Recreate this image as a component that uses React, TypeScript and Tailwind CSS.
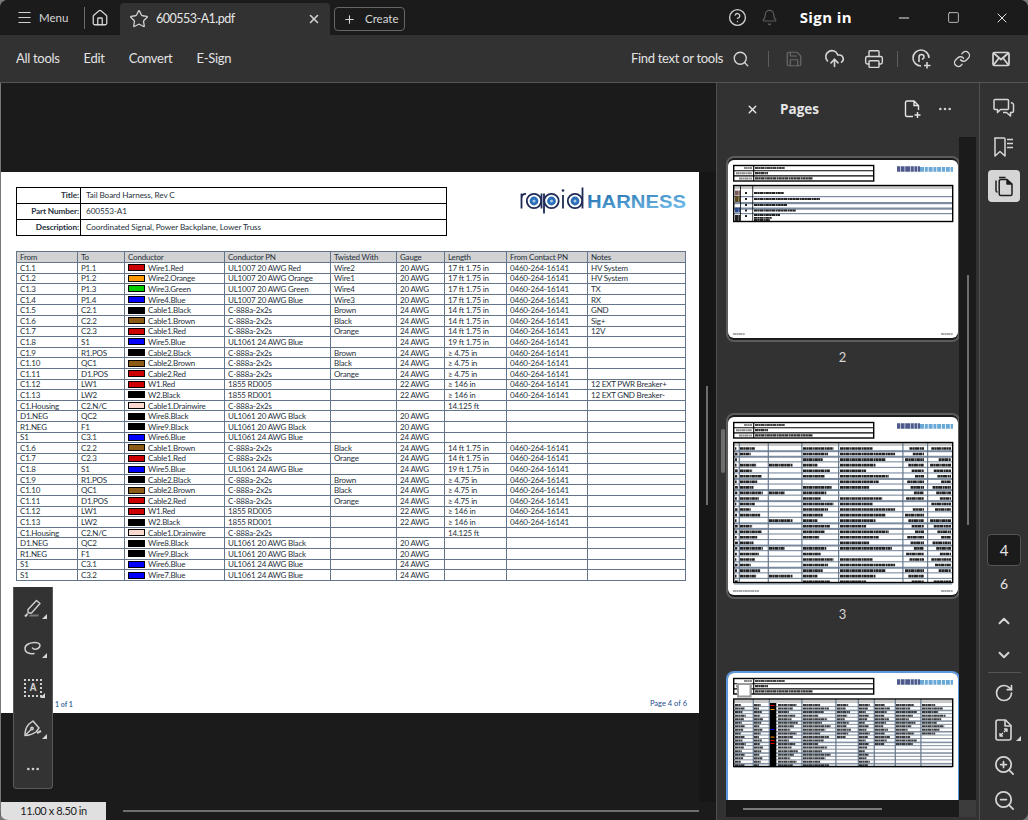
import {
  Bell,
  ChevronDown,
  ChevronUp,
  CircleHelp,
  CloudUpload,
  Ellipsis,
  Home,
  Link,
  Menu,
  Minus,
  Plus,
  Printer,
  RotateCw,
  Save,
  Search,
  Square,
  Star,
  X,
  ZoomIn,
  ZoomOut,
} from "lucide-react";

type Row = [string, string, string, string, string, string, string, string, string, string];

const RED = "#cc0000";
const ORANGE = "#ff9900";
const GREEN = "#00cc00";
const BLUE = "#0000ff";
const BLACK = "#000000";
const BROWN = "#8b5a14";
const DRAIN = "#f7d9cf";
const PN = "0460-264-16141";

const tailRows: Row[] = [
  ["C1.6", "C2.2", BROWN, "Cable1.Brown", "C-888a-2x2s", "Black", "24 AWG", "14 ft 1.75 in", PN, ""],
  ["C1.7", "C2.3", RED, "Cable1.Red", "C-888a-2x2s", "Orange", "24 AWG", "14 ft 1.75 in", PN, ""],
  ["C1.8", "S1", BLUE, "Wire5.Blue", "UL1061 24 AWG Blue", "", "24 AWG", "19 ft 1.75 in", PN, ""],
  ["C1.9", "R1.POS", BLACK, "Cable2.Black", "C-888a-2x2s", "Brown", "24 AWG", "≥ 4.75 in", PN, ""],
  ["C1.10", "QC1", BROWN, "Cable2.Brown", "C-888a-2x2s", "Black", "24 AWG", "≥ 4.75 in", PN, ""],
  ["C1.11", "D1.POS", RED, "Cable2.Red", "C-888a-2x2s", "Orange", "24 AWG", "≥ 4.75 in", PN, ""],
  ["C1.12", "LW1", RED, "W1.Red", "1855 RD005", "", "22 AWG", "≥ 146 in", PN, ""],
  ["C1.13", "LW2", BLACK, "W2.Black", "1855 RD001", "", "22 AWG", "≥ 146 in", PN, ""],
  ["C1.Housing", "C2.N/C", DRAIN, "Cable1.Drainwire", "C-888a-2x2s", "", "", "14.125 ft", "", ""],
  ["D1.NEG", "QC2", BLACK, "Wire8.Black", "UL1061 20 AWG Black", "", "20 AWG", "", "", ""],
  ["R1.NEG", "F1", BLACK, "Wire9.Black", "UL1061 20 AWG Black", "", "20 AWG", "", "", ""],
  ["S1", "C3.1", BLUE, "Wire6.Blue", "UL1061 24 AWG Blue", "", "24 AWG", "", "", ""],
];

const rows: Row[] = [
  ["C1.1", "P1.1", RED, "Wire1.Red", "UL1007 20 AWG Red", "Wire2", "20 AWG", "17 ft 1.75 in", PN, "HV System"],
  ["C1.2", "P1.2", ORANGE, "Wire2.Orange", "UL1007 20 AWG Orange", "Wire1", "20 AWG", "17 ft 1.75 in", PN, "HV System"],
  ["C1.3", "P1.3", GREEN, "Wire3.Green", "UL1007 20 AWG Green", "Wire4", "20 AWG", "17 ft 1.75 in", PN, "TX"],
  ["C1.4", "P1.4", BLUE, "Wire4.Blue", "UL1007 20 AWG Blue", "Wire3", "20 AWG", "17 ft 1.75 in", PN, "RX"],
  ["C1.5", "C2.1", BLACK, "Cable1.Black", "C-888a-2x2s", "Brown", "24 AWG", "14 ft 1.75 in", PN, "GND"],
  ["C1.6", "C2.2", BROWN, "Cable1.Brown", "C-888a-2x2s", "Black", "24 AWG", "14 ft 1.75 in", PN, "Sig+"],
  ["C1.7", "C2.3", RED, "Cable1.Red", "C-888a-2x2s", "Orange", "24 AWG", "14 ft 1.75 in", PN, "12V"],
  ["C1.8", "S1", BLUE, "Wire5.Blue", "UL1061 24 AWG Blue", "", "24 AWG", "19 ft 1.75 in", PN, ""],
  ["C1.9", "R1.POS", BLACK, "Cable2.Black", "C-888a-2x2s", "Brown", "24 AWG", "≥ 4.75 in", PN, ""],
  ["C1.10", "QC1", BROWN, "Cable2.Brown", "C-888a-2x2s", "Black", "24 AWG", "≥ 4.75 in", PN, ""],
  ["C1.11", "D1.POS", RED, "Cable2.Red", "C-888a-2x2s", "Orange", "24 AWG", "≥ 4.75 in", PN, ""],
  ["C1.12", "LW1", RED, "W1.Red", "1855 RD005", "", "22 AWG", "≥ 146 in", PN, "12 EXT PWR Breaker+"],
  ["C1.13", "LW2", BLACK, "W2.Black", "1855 RD001", "", "22 AWG", "≥ 146 in", PN, "12 EXT GND Breaker-"],
  ["C1.Housing", "C2.N/C", DRAIN, "Cable1.Drainwire", "C-888a-2x2s", "", "", "14.125 ft", "", ""],
  ["D1.NEG", "QC2", BLACK, "Wire8.Black", "UL1061 20 AWG Black", "", "20 AWG", "", "", ""],
  ["R1.NEG", "F1", BLACK, "Wire9.Black", "UL1061 20 AWG Black", "", "20 AWG", "", "", ""],
  ["S1", "C3.1", BLUE, "Wire6.Blue", "UL1061 24 AWG Blue", "", "24 AWG", "", "", ""],
  ...tailRows,
  ["S1", "C3.2", BLUE, "Wire7.Blue", "UL1061 24 AWG Blue", "", "24 AWG", "", "", ""],
];

const headers = ["From", "To", "Conductor", "Conductor PN", "Twisted With", "Gauge", "Length", "From Contact PN", "Notes"];
const colWidths = [61, 47, 100, 106, 66, 48, 62, 81, 98];

// the logo's letters are rings with a connector face, so they are drawn; HARNESS stays text
function Logo() {
  const rings = [16, 33.5, 57];
  return (
    <svg width="170" height="28" viewBox="0 0 170 28" className="shrink-0">
      <defs>
        <linearGradient id="harness" x1="0" y1="0" x2="1" y2="1">
          <stop offset="0" stopColor="#1c69ab" />
          <stop offset="1" stopColor="#7fc9f0" />
        </linearGradient>
      </defs>
      <g fill="none" stroke="#1d2b55" strokeWidth="1.8">
        <path d="M3.5 21.5V6.5M3.5 11C4 8 6 6.8 8 7" />
        <path d="M23.5 6.5V21.5M26 6.5V26.5M45 8V21.5M64.5 0.5V21.5" />
        {rings.map((x) => (
          <circle key={x} cx={x} cy="14" r="7.2" />
        ))}
      </g>
      <circle cx="45" cy="3.5" r="1.3" fill="#1d2b55" />
      {rings.map((x) => (
        <g key={x}>
          <circle cx={x} cy="14" r="4.4" fill="#2b6fb8" />
          <circle cx={x} cy="14" r="1.5" fill="#a9cbea" />
        </g>
      ))}
      <text x="69" y="21" fontFamily="'Liberation Sans', sans-serif" fontSize="18" fontWeight="700" fill="url(#harness)" textLength="99" lengthAdjust="spacingAndGlyphs">
        HARNESS
      </text>
    </svg>
  );
}

function PageSheet() {
  return (
    <div className="relative h-[541px] w-[698px] shrink-0 bg-white text-[#27313c] font-['Lato',sans-serif]">
      <div className="flex items-start justify-between pl-[15px] pr-[11px] pt-[15px]">
        <table className="w-[431px] table-fixed border-collapse border border-black text-[8.2px] tracking-[-0.1px]">
          <tbody>
            {[
              ["Title:", "Tail Board Harness, Rev C"],
              ["Part Number:", "600553-A1"],
              ["Description:", "Coordinated Signal, Power Backplane, Lower Truss"],
            ].map(([k, v]) => (
              <tr key={k} className="h-4">
                <td className="w-16 border border-black pr-px text-right font-bold leading-none">{k}</td>
                <td className="border border-black pl-[5px] leading-none">{v}</td>
              </tr>
            ))}
          </tbody>
        </table>
        <Logo />
      </div>
      <table className="ml-[15px] mt-[15px] w-[669px] table-fixed border-collapse border border-black text-[8px] leading-none tracking-[-0.2px]">
        <colgroup>
          {colWidths.map((w, i) => (
            <col key={i} style={{ width: w }} />
          ))}
        </colgroup>
        <thead>
          <tr className="h-[11px] bg-[#d2d2d2]">
            {headers.map((h) => (
              <th key={h} className="border border-[#64748b] pl-[3px] text-left font-normal">
                {h}
              </th>
            ))}
          </tr>
        </thead>
        <tbody>
          {rows.map((r, i) => (
            <tr key={i} className="h-[10.6px]">
              <td className="border border-[#64748b] pl-[3px] whitespace-nowrap">{r[0]}</td>
              <td className="border border-[#64748b] pl-[3px] whitespace-nowrap">{r[1]}</td>
              <td className="border border-[#64748b] pl-[3px] whitespace-nowrap">
                <div className="flex items-center gap-[3px]">
                  <span className="h-[7px] w-[17px] border border-black" style={{ backgroundColor: r[2] }} />
                  {r[3]}
                </div>
              </td>
              {r.slice(4).map((c, j) => (
                <td key={j} className="border border-[#64748b] pl-[3px] whitespace-nowrap">
                  {c}
                </td>
              ))}
            </tr>
          ))}
        </tbody>
      </table>
      <div className="absolute bottom-[4px] left-[54px] text-[7px] font-bold text-[#3f6f9f]">1 of 1</div>
      <div className="absolute bottom-[4px] right-[12px] text-[7.5px] text-[#1d4f8f]">Page 4 of 6</div>
    </div>
  );
}

// greeked line of text for the tiny page previews
function Txt({ x, y, w, h = 2.4, c = "#222" }: { x: number; y: number; w: number; h?: number; c?: string }) {
  return <line x1={x} x2={x + w} y1={y} y2={y} stroke={c} strokeWidth={h} strokeDasharray="3 0.3 2 0.3 4 0.5 1.5 0.3" />;
}

function ThumbHead() {
  return (
    <>
      <rect x="5.7" y="5.5" width="140" height="15.5" fill="#fff" stroke="#000" strokeWidth="1.4" />
      <path d="M5 10.7H146M5 15.9H146M25.7 5V21" stroke="#000" strokeWidth="1.1" />
      <Txt x={27} y={8} w={30} h={2.2} c="#444" />
      <Txt x={27} y={13.2} w={13} h={2.2} c="#333" />
      <Txt x={27} y={18.4} w={58} h={2.2} c="#333" />
      <Txt x={16} y={8} w={8} h={2} c="#888" />
      <Txt x={8} y={13.2} w={16} h={2} c="#888" />
      <Txt x={11} y={18.4} w={13} h={2} c="#888" />
      <line x1="169" x2="192" y1="9" y2="9" stroke="#4e5a8c" strokeWidth="5.5" strokeDasharray="3 0.6 4 0.6 5 0.6 3 0.6" />
      <line x1="192" x2="225" y1="9.4" y2="9.4" stroke="#6aa8d8" strokeWidth="4.6" strokeDasharray="4 0.8 3 0.8 4 0.8 3 0.8" />
    </>
  );
}

function ThumbOne() {
  return (
    <svg width="230" height="178" viewBox="0 0 230 178" className="block blur-[0.3px]">
      <rect width="230" height="178" fill="#fff" />
      <ThumbHead />
      {[36, 42, 47.5, 53].map((y, i) => (
        <rect key={y} x="6" y={y} width="218" height={i === 1 || i === 2 ? 2.2 : 1.2} fill="#7b8ca0" />
      ))}
      <rect x="6" y="26" width="218" height="3" fill="#c8c8c8" />
      <rect x="5.7" y="25.5" width="219" height="36" fill="none" stroke="#000" strokeWidth="1.4" />
      <path d="M12.5 25V62M24.7 25V62" stroke="#000" strokeWidth="0.8" />
      <Txt x={7} y={33} w={5} h={5} c="#7a5a5a" />
      <Txt x={7} y={39} w={5} h={6} c="#5a4a20" />
      <Txt x={7} y={50} w={5} h={5} c="#2d4a88" />
      <Txt x={7} y={58} w={5} h={6} c="#222" />
      {[
        [33, 30],
        [39, 66],
        [45, 33],
        [50.5, 42],
        [55, 26],
        [57.8, 18],
        [60, 16],
      ].map(([y, w]) => (
        <Txt key={y} x={26} y={y} w={w} h={1.8} />
      ))}
      {[33, 39, 45, 50.5, 56].map((y) => (
        <Txt key={y} x={17} y={y} w={2} h={1.8} />
      ))}
      <Txt x={5} y={174} w={12} h={2} c="#aaa" />
      <Txt x={213} y={174} w={12} h={2} c="#aaa" />
    </svg>
  );
}

function ThumbTwo() {
  const cols = [7, 12, 41, 75, 112, 176, 201];
  const maxW = [3, 24, 28, 32, 58, 20, 22];
  const lines = [10.7, 39.7, 73.3, 110, 174.3, 199];
  return (
    <svg width="230" height="178" viewBox="0 0 230 178" className="block blur-[0.3px]">
      <rect width="230" height="178" fill="#fff" />
      <ThumbHead />
      <rect x="6" y="26" width="218" height="3" fill="#c8c8c8" />
      {Array.from({ length: 25 }).map((_, i) => {
        const y = 31.5 + i * 5.55;
        return (
          <g key={i}>
            <rect x="6" y={y + 1.7} width="218" height={i % 4 === 1 || i % 7 === 0 ? 2 : 1.1} fill="#7b8ca0" />
            {cols.map((x, j) => {
              if (j > 0 && (i * 3 + j * 5) % 11 === 0) return null;
              if (j === 2 && i % 5 !== 3) return null;
              const w = maxW[j] * (0.45 + ((i * 7 + j * 13) % 10) / 18);
              return <Txt key={j} x={j >= 5 ? x + maxW[j] - w : x} y={y} w={w} h={2.6} />;
            })}
          </g>
        );
      })}
      {lines.map((x) => (
        <rect key={x} x={x} y="25" width="1.2" height="141" fill="#66788c" />
      ))}
      <rect x="5.7" y="25.5" width="219" height="140" fill="none" stroke="#000" strokeWidth="1.4" />
      <Txt x={5} y={174} w={26} h={2} c="#aaa" />
      <Txt x={213} y={174} w={12} h={2} c="#aaa" />
    </svg>
  );
}

function ThumbThree() {
  const cols = [7, 26, 50, 75, 109, 131, 147, 168, 194];
  const maxW = [11, 9, 20, 28, 14, 11, 15, 21, 24];
  const lines = [24.7, 40.7, 73.3, 107.3, 129.7, 145.7, 166.7, 192.3];
  const marks: [number, string][] = [
    [32, "#e00000"],
    [36, "#ff9900"],
    [56, "#0000ff"],
    [63.6, "#ff9900"],
    [67, "#e00000"],
    [70, "#e00000"],
  ];
  return (
    <svg width="230" height="127" viewBox="0 0 230 127" className="block blur-[0.3px]">
      <rect width="230" height="127" fill="#fff" />
      <ThumbHead />
      <rect x="6" y="27" width="218" height="3" fill="#c8c8c8" />
      {Array.from({ length: 18 }).map((_, i) => {
        const y = 32 + i * 3.55;
        return (
          <g key={i}>
            <rect x="6" y={y + 1.1} width="218" height={i % 3 === 1 ? 1.6 : 1} fill="#8292a4" />
            {cols.map((x, j) => {
              if (i > 11 && j >= 6) return null;
              if (j === 4 && i > 9) return null;
              if (j === 8 && i > 8) return null;
              const w = maxW[j] * (0.55 + ((i * 5 + j * 3) % 8) / 16);
              return <Txt key={j} x={x} y={y} w={w} h={2} c="#3a3a3a" />;
            })}
          </g>
        );
      })}
      <rect x="41.7" y="30" width="6.6" height="63" fill="#000" />
      {marks.map(([y, c]) => (
        <rect key={y} x="42.5" y={y} width="4" height="1" fill={c} />
      ))}
      {lines.map((x) => (
        <rect key={x} x={x} y="26" width="1.2" height="67" fill="#66788c" />
      ))}
      <rect x="5.7" y="26" width="219" height="67.5" fill="none" stroke="#000" strokeWidth="1.4" />
      <rect x="10" y="11" width="12.5" height="12.5" fill="#fff" stroke="#9a9a9a" strokeWidth="2" />
    </svg>
  );
}

function PagesIcon() {
  return (
    <svg width="20" height="22" viewBox="0 0 20 22" fill="none" stroke="currentColor" strokeWidth="1.5" strokeLinejoin="round">
      <path d="M5 2.5H11.5M2 5.5V15.5C2 16.5 2.5 17 3.5 17" />
      <path d="M7 4.5H13L18 9V19C18 20 17.3 20.5 16.5 20.5H7C6 20.5 5.2 20 5.2 19V6.5C5.2 5.3 6 4.5 7 4.5Z" />
      <path d="M13 4.5V9H18" fill="currentColor" />
    </svg>
  );
}

function Caret({ className }: { className: string }) {
  return <span className={`absolute h-0 w-0 border-b-[5px] border-l-[5px] border-b-[#d6d6d6] border-l-transparent ${className}`} />;
}

function RightRail() {
  return (
    <div className="flex w-[49px] shrink-0 flex-col items-center border-l border-[#4f4f4f] bg-[#323232] text-[#d6d6d6]">
      <svg width="22" height="22" viewBox="0 0 22 22" fill="none" stroke="currentColor" strokeWidth="1.5" strokeLinejoin="round" className="mt-[14px]">
        <path d="M2 2.5H14.5C15.2 2.5 15.5 3 15.5 3.5V11.5C15.5 12 15.2 12.5 14.5 12.5H7.5L4.5 15.5V12.5H2C1.4 12.5 1 12 1 11.5V3.5C1 3 1.4 2.5 2 2.5Z" />
        <path d="M18 5.5C19.5 6 20.5 6.5 20.5 7.5V14C20.5 15 20 15.5 19 15.5H17.5V19L13.5 15.5H10" />
      </svg>
      <svg width="24" height="22" viewBox="0 0 24 22" fill="none" stroke="currentColor" strokeWidth="1.5" strokeLinejoin="round" className="mt-[17px]">
        <path d="M3 2H12C12.6 2 13 2.4 13 3V20L8 15.5L3 20V3C3 2.4 2.4 2 3 2Z" />
        <path d="M15 3.5H21M15 7.5H21M15 11.5H21" />
      </svg>
      <div className="mr-px mt-[12px] flex h-8 w-8 items-center justify-center rounded bg-[#d5d5d5] text-[#1e1e1e]">
        <PagesIcon />
      </div>
      <div className="mt-[332px] flex h-8 w-[34px] items-center justify-center rounded border border-[#555] bg-[#1b1b1b] text-[15px] text-[#e4e4e4]">
        4
      </div>
      <div className="mt-[8px] text-[14px] leading-5 text-[#e4e4e4]">6</div>
      <ChevronUp size={18} strokeWidth={2.5} className="mt-[18px]" />
      <ChevronDown size={18} strokeWidth={2.5} className="mt-[16px]" />
      <div className="mt-[8px] h-px w-[33px] bg-[#555]" />
      <RotateCw size={20} className="mt-[10px]" />
      <div className="relative mt-4">
        <svg width="20" height="22" viewBox="0 0 20 22" fill="none" stroke="currentColor" strokeWidth="1.6" strokeLinejoin="round">
          <path d="M4 1H11.5L17 6.5V19C17 20 16.3 21 15 21H4C2.8 21 2 20 2 19V3C2 1.8 2.8 1 4 1Z" />
          <path d="M11 1V7H17" />
          <path d="M10 10H13V13M9 17H6V14M13 10L10 13M6 17L9 14" strokeWidth="1.4" />
        </svg>
        <Caret className="-right-[7px] bottom-0" />
      </div>
      <ZoomIn size={23} strokeWidth={1.8} className="mt-[13px]" />
      <ZoomOut size={23} strokeWidth={1.8} className="mt-[12px]" />
    </div>
  );
}

function PagesPanel() {
  return (
    <div className="flex w-[263px] shrink-0 flex-col border-l border-[#4f4f4f] bg-[#323232] text-[#e6e6e6]">
      <div className="flex h-[54px] shrink-0 items-center pb-[2px]">
        <X size={13} strokeWidth={2.5} className="ml-[29px]" />
        <span className="ml-[21px] font-['Open_Sans',sans-serif] text-[13.5px] font-bold">Pages</span>
        <svg width="18" height="19" viewBox="0 0 18 19" fill="none" stroke="currentColor" strokeWidth="1.4" className="ml-[85px]">
          <path d="M9 16.5H3C2 16.5 1.5 16 1.5 15V2.5C1.5 1.5 2 1 3 1H10L14.5 5.5V10M10 1V5.5H14.5" />
          <path d="M13.5 12V18M10.5 15H16.5" />
        </svg>
        <Ellipsis size={16} className="ml-[15px] text-[#cfcfcf]" />
      </div>
      <div className="flex min-h-0 flex-1">
        <div className="relative flex w-[243px] flex-col items-center overflow-hidden pl-[10px] pr-[1px] pt-[19px]">
          <span className="absolute left-[4px] top-[292px] h-[44px] w-1 rounded-sm bg-[#6d6d6d]" />
          <div className="rounded-lg border-2 border-[#5c5c5c] bg-[#1b1b1b] py-[2px]">
            <div className="overflow-hidden rounded-md">
              <ThumbOne />
            </div>
          </div>
          <div className="mt-[6px] text-[13px] leading-[18px] text-[#d6d6d6]">2</div>
          <div className="mt-[47px] rounded-lg border-2 border-[#5c5c5c] bg-[#1b1b1b] py-[2px]">
            <div className="overflow-hidden rounded-md">
              <ThumbTwo />
            </div>
          </div>
          <div className="mt-[6px] text-[13px] leading-[18px] text-[#d6d6d6]">3</div>
          <div className="mt-[48px] h-[129px] shrink-0 rounded-t-lg border-x-2 border-t-2 border-[#5b97da] bg-[#1b1b1b]">
            <div className="overflow-hidden rounded-t-md">
              <ThumbThree />
            </div>
          </div>
          <div className="absolute bottom-[3px] left-[9px] right-0 flex h-[17px] items-center bg-[#1b1b1b]">
            <span className="ml-[17px] h-[2px] w-[139px] bg-[#7a7a7a]" />
          </div>
        </div>
        <div className="w-5 shrink-0 pr-[3px]">
          <div className="relative mb-[3px] h-[calc(100%-3px)] w-[17px] bg-[#1b1b1b]">
            <span className="absolute left-2 top-[138px] h-[250px] w-[2px] bg-[#6f6f6f]" />
            <span className="absolute bottom-0 left-0 h-[17px] w-[17px] bg-[#3c3c3c]" />
          </div>
        </div>
      </div>
    </div>
  );
}

function ToolPalette() {
  return (
    <div className="absolute left-[12px] top-[504px] flex h-[202px] w-10 flex-col items-center rounded-b border border-t-0 border-[#5a5a5a] bg-[#333] text-[#d0d0d0]">
      <div className="relative mt-3">
        <svg width="20" height="20" viewBox="0 0 20 20" fill="none" stroke="currentColor" strokeWidth="1.4" strokeLinejoin="round">
          <path d="M13.5 1.5L17 4.5L8.5 14H5V10.5Z" />
          <path d="M2 17.5L4.5 15" strokeWidth="2" />
          <path d="M6 17.5H15L16 15.5H7Z" fill="#777" stroke="none" />
        </svg>
        <Caret className="-right-[4px] bottom-0" />
      </div>
      <div className="relative mt-[21px]">
        <svg width="20" height="18" viewBox="0 0 20 18" fill="none" stroke="currentColor" strokeWidth="1.5" strokeLinecap="round">
          <path d="M11 13.5C8 14 2 13.5 2 8.5C2 4.5 7 2.5 12 2.5C16 2.5 18 4.5 16.5 7C15 9.5 10.5 10 9.5 8" />
        </svg>
        <Caret className="-right-[4px] bottom-0" />
      </div>
      <div className="relative mt-[21px] flex h-[18px] w-[18px] items-center justify-center border-2 border-dotted border-[#d0d0d0] font-['Liberation_Sans',sans-serif] text-[10px] font-bold leading-none">
        A
        <Caret className="-bottom-[3px] -right-[5px]" />
      </div>
      <div className="relative mt-[22px]">
        <svg width="20" height="20" viewBox="0 0 20 20" fill="none" stroke="currentColor" strokeWidth="1.5" strokeLinejoin="round">
          <path d="M10 2L16 9L13 13C10 15 6 16.5 2 16.5C2 12 3 8 6 5Z" />
          <path d="M2.5 16L8 10.5" />
          <circle cx="9" cy="9.5" r="1.2" />
          <path d="M14 14L18 12" strokeWidth="2" />
        </svg>
        <Caret className="-right-[4px] bottom-0" />
      </div>
      <Ellipsis size={16} className="mt-[22px] text-[#cfcfcf]" />
    </div>
  );
}

function TitleBar() {
  return (
    <div className="flex h-[35px] shrink-0 items-stretch bg-[#1b1b1b] text-[#e6e6e6]">
      <div className="flex items-center pl-4">
        <Menu size={17} strokeWidth={1.6} className="text-[#cfcfcf]" />
        <span className="ml-[6px] w-[29px] text-[11.5px] text-[#d6d6d6]">Menu</span>
        <span className="ml-4 h-[22px] w-px bg-[#6a6a6a]" />
        <Home size={18} strokeWidth={1.7} className="ml-[6px] text-[#d6d6d6]" />
      </div>
      <div className="ml-[11px] mt-[3px] flex w-[210px] items-center rounded-t bg-[#323232] pl-[9px]">
        <Star size={20} strokeWidth={1.6} className="text-[#cfcfcf]" />
        <span className="ml-[7px] text-[12.5px] leading-none tracking-[-0.5px]">600553-A1.pdf</span>
        <X size={14} strokeWidth={2.8} className="ml-auto mr-[9px] text-[#cfcfcf]" />
      </div>
      <div className="ml-1 mt-[7px] flex h-[24px] w-[71px] items-center rounded border border-[#666] pl-[8px] text-[11.5px] text-[#d6d6d6]">
        <Plus size={13} strokeWidth={2} />
        <span className="ml-[9px]">Create</span>
      </div>
      <div className="ml-auto flex items-center">
        <CircleHelp size={19} strokeWidth={1.7} className="text-[#cfcfcf]" />
        <Bell size={17} strokeWidth={1.6} className="ml-[14px] text-[#5e5e5e]" />
        <span className="ml-[22px] font-['Open_Sans',sans-serif] text-[15px] font-bold tracking-[0.4px] text-white">Sign in</span>
        <Minus size={16} strokeWidth={1.6} className="ml-[44px]" />
        <Square size={13} strokeWidth={1.4} className="ml-[35px]" />
        <X size={16} strokeWidth={1.5} className="ml-[34px] mr-[18px]" />
      </div>
    </div>
  );
}

function Toolbar() {
  return (
    <div className="flex h-[48px] shrink-0 items-center border-b border-[#555] bg-[#323232] pl-4 text-[13px] tracking-[-0.3px] text-[#e2e2e2]">
      <span className="pt-px">All tools</span>
      <span className="ml-6 pt-px">Edit</span>
      <span className="ml-6 pt-px">Convert</span>
      <span className="ml-6 pt-px">E-Sign</span>
      <div className="ml-auto flex items-center text-[#d6d6d6]">
        <span className="pt-px text-[#e2e2e2]">Find text or tools</span>
        <Search size={18} strokeWidth={1.8} className="ml-[9px]" />
        <span className="ml-[18px] h-[16px] w-px bg-[#5e5e5e]" />
        <Save size={18} strokeWidth={1.6} className="ml-[16px] text-[#6a6a6a]" />
        <CloudUpload size={21} strokeWidth={1.8} className="ml-[21px]" />
        <Printer size={20} strokeWidth={1.7} className="ml-[19px]" />
        <span className="ml-[13px] h-[16px] w-px bg-[#5e5e5e]" />
        <svg width="20" height="20" viewBox="0 0 20 20" fill="none" stroke="currentColor" strokeWidth="1.6" className="ml-[14px]">
          <path d="M9 17A8 8 0 1 1 17 9" />
          <path d="M7 13V8C7 6.5 8 5.5 9.5 5.5C11 5.5 12 6.5 12 8C12 9.5 10.5 10 10 10.5" />
          <path d="M15 13V19.5M12 16.5H18.5" />
        </svg>
        <Link size={18} strokeWidth={1.8} className="ml-[21px]" />
        <svg width="18" height="16" viewBox="0 0 18 16" fill="none" stroke="currentColor" strokeWidth="1.7" strokeLinejoin="round" className="ml-[21px] mr-[18px]">
          <rect x="1" y="1.5" width="16" height="13" rx="1.5" />
          <path d="M1.5 2L9 8.5L16.5 2M1.5 14L7 7M16.5 14L11 7" />
        </svg>
      </div>
    </div>
  );
}

export default function App() {
  return (
    <div className="h-[820px] w-[1028px] bg-[#777]">
      <div className="flex h-full w-full flex-col overflow-hidden rounded-lg bg-[#1b1b1b] font-['Lato',sans-serif]">
        <TitleBar />
        <Toolbar />
        <div className="flex min-h-0 flex-1">
          <div className="relative flex min-w-0 flex-1 flex-col border-l border-[#777]">
            <div className="flex flex-1 items-start pt-[89px]">
              <PageSheet />
              <div className="h-full w-[17px] shrink-0 self-stretch bg-[#161616]" />
            </div>
            <div className="absolute right-[8px] top-[303px] h-[119px] w-[2px] bg-[#6d6d6d]" />
            <ToolPalette />
            <div className="flex h-[18px] shrink-0 items-center">
              <div className="flex h-full w-[105px] items-center justify-center bg-[#e0e0e0] text-[11px] tracking-[-0.4px] text-[#222]">
                11.00 x 8.50 in
              </div>
              <span className="ml-[17px] h-[2px] w-[576px] bg-[#6f6f6f]" />
            </div>
          </div>
          <PagesPanel />
          <RightRail />
        </div>
      </div>
    </div>
  );
}
